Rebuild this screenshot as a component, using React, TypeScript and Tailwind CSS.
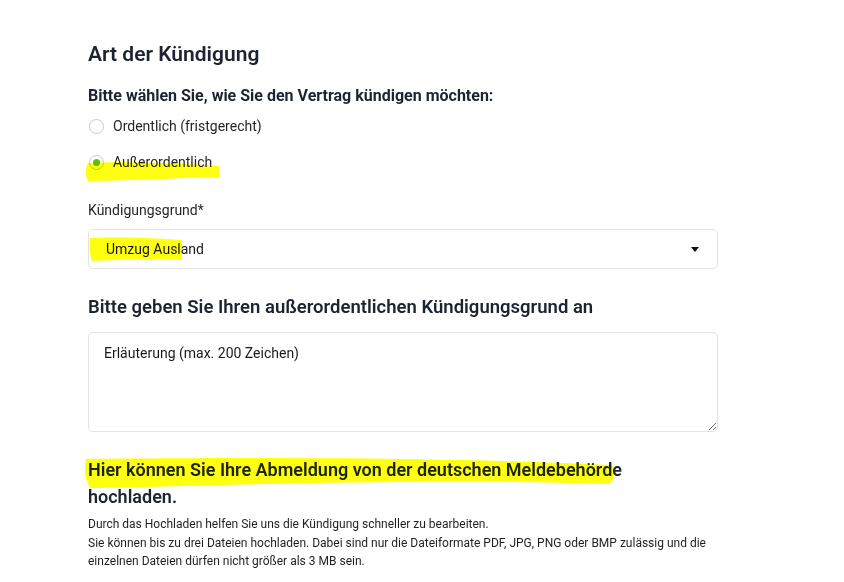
import React from "react";

function Highlights() {
  return (
    <svg
      className="pointer-events-none absolute left-0 top-0 mix-blend-multiply"
      width="844"
      height="582"
      viewBox="0 0 844 582"
    >
      <g fill="#ffff10">
        <path d="M88 163 C 120 161, 180 163, 219 166 L 219 177 C 180 178, 120 181, 88 181 C 85 175, 85 168, 88 163 Z" />
        <path d="M90 238 C 115 236, 150 238, 182 240 L 182 260 C 150 259, 115 260, 92 261 C 89 253, 89 244, 90 238 Z" />
        <path d="M86 459 C 200 458, 420 456, 612 465 C 615 472, 614 480, 610 484 C 420 478, 200 486, 90 488 C 85 480, 84 468, 86 459 Z" />
      </g>
    </svg>
  );
}

export default function App() {
  return (
    <div
      className="relative h-[582px] w-[844px] overflow-hidden bg-white"
      style={{ fontFamily: "Roboto, 'Noto Sans', sans-serif" }}
    >
      <div className="flex w-[718px] flex-col pl-[88px] pt-[40px] text-[#1f242c]">
        <h1 className="text-[21px] font-semibold leading-[28px] text-[#1d2430]">
          Art der Kündigung
        </h1>
        <p className="mt-[17px] text-[16px] font-bold leading-[22px] text-[#1d2430]">
          Bitte wählen Sie, wie Sie den Vertrag kündigen möchten:
        </p>
        <div className="mt-[7px] flex flex-col gap-[12px]">
          <label className="flex h-[24px] items-center gap-[9px]">
            <span className="ml-[1px] h-[15px] w-[15px] rounded-full border border-[#c8c8c8] bg-white" />
            <span className="text-[14px] text-[#262626]">Ordentlich (fristgerecht)</span>
          </label>
          <label className="flex h-[24px] items-center gap-[9px]">
            <span className="ml-[1px] flex h-[15px] w-[15px] items-center justify-center rounded-full border border-[#c8c8c8] bg-white">
              <span className="h-[7px] w-[7px] rounded-full bg-[#5cbf13]" />
            </span>
            <span className="text-[14px] text-[#262626]">Außerordentlich</span>
          </label>
        </div>
        <p className="mt-[26px] text-[14px] leading-[20px] text-[#262626]">Kündigungsgrund*</p>
        <div className="mt-[9px] flex h-[40px] items-center justify-between rounded-[5px] border border-[#e3e3e3] pl-[17px] pr-[18px]">
          <span className="text-[14px] text-[#1a1a1a]">Umzug Ausland</span>
          <svg width="8" height="5" viewBox="0 0 8 5">
            <path d="M0 0 H8 L4 5 Z" fill="#111" />
          </svg>
        </div>
        <h2 className="mt-[25px] text-[18.5px] font-semibold leading-[26px] text-[#1d2430]">
          Bitte geben Sie Ihren außerordentlichen Kündigungsgrund an
        </h2>
        <textarea
          className="mt-[12px] h-[100px] w-full resize-y rounded-[5px] border border-[#e3e3e3] px-[15px] py-[11px] text-[14px] leading-[18px] outline-none placeholder:text-[#1a1a1a]"
          placeholder="Erläuterung (max. 200 Zeichen)"
        />
        <h3 className="mt-[24px] w-[600px] text-[18px] font-semibold leading-[27px] text-[#1d2430]">
          Hier können Sie Ihre Abmeldung von der deutschen Meldebehörde hochladen.
        </h3>
        <p className="mt-[5px] text-[12px] leading-[18.5px] text-[#1f1f1f]">
          Durch das Hochladen helfen Sie uns die Kündigung schneller zu bearbeiten.
          <br />
          Sie können bis zu drei Dateien hochladen. Dabei sind nur die Dateiformate PDF, JPG, PNG oder BMP zulässig und die einzelnen Dateien dürfen nicht größer als 3 MB sein.
        </p>
      </div>
      <Highlights />
    </div>
  );
}
